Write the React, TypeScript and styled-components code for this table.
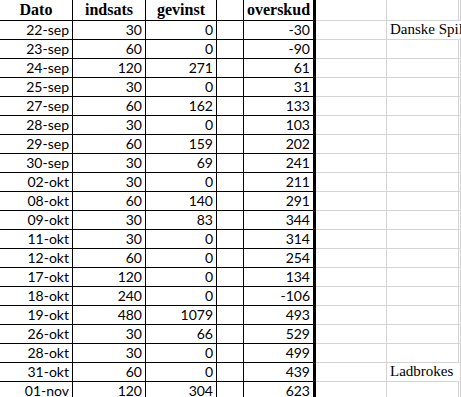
import styled, {createGlobalStyle} from "styled-components";

type Row = [string, number, number, number]

const rows: Row[] = [
    ["22-sep", 30, 0, -30],
    ["23-sep", 60, 0, -90],
    ["24-sep", 120, 271, 61],
    ["25-sep", 30, 0, 31],
    ["27-sep", 60, 162, 133],
    ["28-sep", 30, 0, 103],
    ["29-sep", 60, 159, 202],
    ["30-sep", 30, 69, 241],
    ["02-okt", 30, 0, 211],
    ["08-okt", 60, 140, 291],
    ["09-okt", 30, 83, 344],
    ["11-okt", 30, 0, 314],
    ["12-okt", 60, 0, 254],
    ["17-okt", 120, 0, 134],
    ["18-okt", 240, 0, -106],
    ["19-okt", 480, 1079, 493],
    ["26-okt", 30, 66, 529],
    ["28-okt", 30, 0, 499],
    ["31-okt", 60, 0, 439],
    ["01-nov", 120, 304, 623],
]

// notes in column G, keyed by row index
const notes: Record<number, string> = {
    0: "Danske Spil",
    18: "Ladbrokes",
}

const App = () => {
    return (
        <>
            <GlobalStyle/>
            <Sheet>
                <HeadCell>Dato</HeadCell>
                <HeadCell>indsats</HeadCell>
                <HeadCell>gevinst</HeadCell>
                <HeadCell/>
                <HeadCell $thick>overskud</HeadCell>
                <GridCell $head/>
                <GridCell $head/>
                <GridCell $head/>

                {rows.map(([dato, indsats, gevinst, overskud], i) => (
                    <Line key={dato + i}>
                        <NumCell>{dato}</NumCell>
                        <NumCell>{indsats}</NumCell>
                        <NumCell>{gevinst}</NumCell>
                        <NumCell/>
                        <NumCell $thick>{overskud}</NumCell>
                        <GridCell/>
                        <GridCell $spill={!!notes[i]}>
                            {notes[i] && <Note>{notes[i]}</Note>}
                        </GridCell>
                        <GridCell/>
                    </Line>
                ))}
            </Sheet>
        </>
    )
}

export default App

const GlobalStyle = createGlobalStyle`
    html, body {
        margin: 0;
        padding: 0;
        background: #ffffff;
        overflow: hidden;
    }
`

const Sheet = styled.div`
    display: grid;
    grid-template-columns: 73px 73px 71px 27px 72px 71px 72px 1fr;
    grid-auto-rows: 19px;
    grid-template-rows: 21px;
    width: 461px;
    height: 397px;
    overflow: hidden;
    color: #000;
`

const Line = styled.div`
    display: contents;
`

const Cell = styled.div<{ $thick?: boolean }>`
    box-sizing: border-box;
    border-bottom: 1px solid #000;
    border-right: ${({$thick}) => $thick ? '3px' : '1px'} solid #000;
    white-space: nowrap;
    display: flex;
    align-items: flex-end;
    overflow: hidden;
`

const HeadCell = styled(Cell)`
    justify-content: center;
    font-family: "Liberation Serif", serif;
    font-weight: bold;
    font-size: 16px;
    line-height: 18px;
    padding-bottom: 1px;
`

const NumCell = styled(Cell)`
    justify-content: flex-end;
    padding: 0 3px 1px 0;
    font-family: Lato, "Liberation Sans", sans-serif;
    font-size: 14px;
    line-height: 17px;
`

const GridCell = styled.div<{ $head?: boolean, $spill?: boolean }>`
    box-sizing: border-box;
    position: relative;
    border-bottom: 1px solid #d4d4d4;
    border-right: 1px solid ${({$spill}) => $spill ? 'transparent' : '#d4d4d4'};
`

const Note = styled.span`
    position: absolute;
    left: 3px;
    bottom: 1px;
    white-space: nowrap;
    font-family: "Liberation Serif", serif;
    font-size: 15px;
    line-height: 17px;
    background: #ffffff;
    z-index: 1;
`
